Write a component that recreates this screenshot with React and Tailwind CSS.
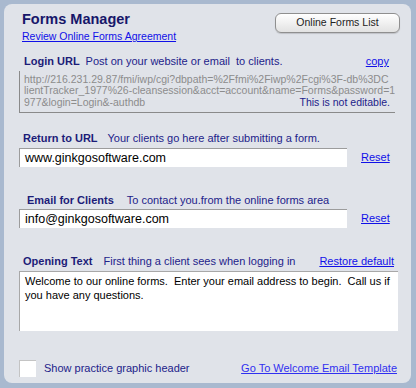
import React from "react";

// Forms Manager settings panel
const font = { fontFamily: '"Liberation Sans", Arial, sans-serif' };

function FieldLabel({ label, hint, indent, gap }) {
    return (
        <div className={"flex items-center h-[13px] text-[11px] leading-[13px] " + indent}>
            <span className="font-bold text-[#1c1c78]">{label}</span>
            <span className={"text-[#22228a] " + gap}>{hint}</span>
        </div>
    );
}

function TextBox({ value }) {
    return (
        <div className="w-[328px] h-[19px] bg-white border-t border-l border-[#9c9c9c] pl-[5px] text-[12.5px] leading-[18px] text-black">
            {value}
        </div>
    );
}

function ResetLink() {
    return <a href="#" className="ml-[14px] text-[11px] text-[#1010e8] underline">Reset</a>;
}

export default function App() {
    return (
        <div style={font} className="w-[416px] h-[388px] bg-[#a9b9cf] pt-[4px] pl-[4px]">
            <div className="w-[407px] h-[379px] rounded-[8px] bg-[#e0e3e9] pl-[15px] pt-[7px]">

                {/* Header */}
                <div className="flex justify-between items-start">
                    <div className="ml-[3px]">
                        <h1 className="text-[14.5px] leading-[17px] font-bold text-[#17176a]">Forms Manager</h1>
                        <a href="#" className="block mt-[2px] text-[10.5px] leading-[12px] text-[#1010e8] underline">
                            Review Online Forms Agreement
                        </a>
                    </div>
                    <button className="mt-[2px] mr-[11px] w-[125px] h-[20px] rounded-[6px] border border-[#8f8f8f] bg-gradient-to-b from-white to-[#e2e2e2] text-[10.5px] text-[#222] shadow-[0_1px_1px_rgba(0,0,0,0.15)]">
                        Online Forms List
                    </button>
                </div>

                {/* Login URL */}
                <div className="mt-[13px] w-[376px] flex items-center justify-between">
                    <FieldLabel label="Login URL" hint="Post on your website or email  to clients." indent="ml-[5px]" gap="ml-[6px] whitespace-pre" />
                    <a href="#" className="mr-[6px] text-[11px] leading-[13px] text-[#1010e8] underline">copy</a>
                </div>
                <div className="mt-[2.5px] w-[376px] h-[42px] border-l border-b border-[#8a8a8a] pl-[4px] pt-[3px] text-[10.5px] leading-[11.5px] text-[#8c8c8c] whitespace-nowrap overflow-hidden">
                    <div>http://216.231.29.87/fmi/iwp/cgi?dbpath=%2Ffmi%2Fiwp%2Fcgi%3F-db%3DC</div>
                    <div>lientTracker_1977%26-cleansession&amp;acct=account&amp;name=Forms&amp;password=1</div>
                    <div className="flex justify-between pr-[5px]">
                        <span>977&amp;login=Login&amp;-authdb</span>
                        <span className="text-[#22228a]">This is not editable.</span>
                    </div>
                </div>

                {/* Return to URL */}
                <div className="mt-[19.5px]">
                    <FieldLabel label="Return to URL" hint="Your clients go here after submitting a form." indent="ml-[4px]" gap="ml-[10px]" />
                </div>
                <div className="mt-[2.5px] flex items-center">
                    <TextBox value="www.ginkgosoftware.com" />
                    <ResetLink />
                </div>

                {/* Email for Clients */}
                <div className="mt-[27px]">
                    <FieldLabel label="Email for Clients" hint="To contact you.from the online forms area" indent="ml-[8px]" gap="ml-[13px]" />
                </div>
                <div className="mt-[2.5px] flex items-center">
                    <TextBox value="info@ginkgosoftware.com" />
                    <ResetLink />
                </div>

                {/* Opening Text */}
                <div className="mt-[27px] w-[376px] flex items-center justify-between">
                    <FieldLabel label="Opening Text" hint="First thing a client sees when logging in" indent="ml-[4px]" gap="ml-[11px]" />
                    <a href="#" className="mr-[1px] text-[11px] leading-[13px] text-[#1010e8] underline">Restore default</a>
                </div>
                <div className="mt-[2.5px] w-[379px] h-[60px] bg-white border-l border-t border-[#a8a8a8] pl-[5px] pr-[2px] pt-[2px] text-[11px] leading-[14px] text-black whitespace-pre-wrap">
                    {"Welcome to our online forms.  Enter your email address to begin.  Call us if you have any questions."}
                </div>

                {/* Footer */}
                <div className="mt-[29px] w-[378px] flex items-center justify-between">
                    <div className="flex items-center">
                        <div className="w-[17px] h-[17px] bg-white border-l border-t border-[#c4c4c4]" />
                        <span className="ml-[8px] text-[11px] text-[#22228a]">Show practice graphic header</span>
                    </div>
                    <a href="#" className="text-[11px] text-[#3030f0] underline">Go To Welcome Email Template</a>
                </div>
            </div>
        </div>
    );
}
